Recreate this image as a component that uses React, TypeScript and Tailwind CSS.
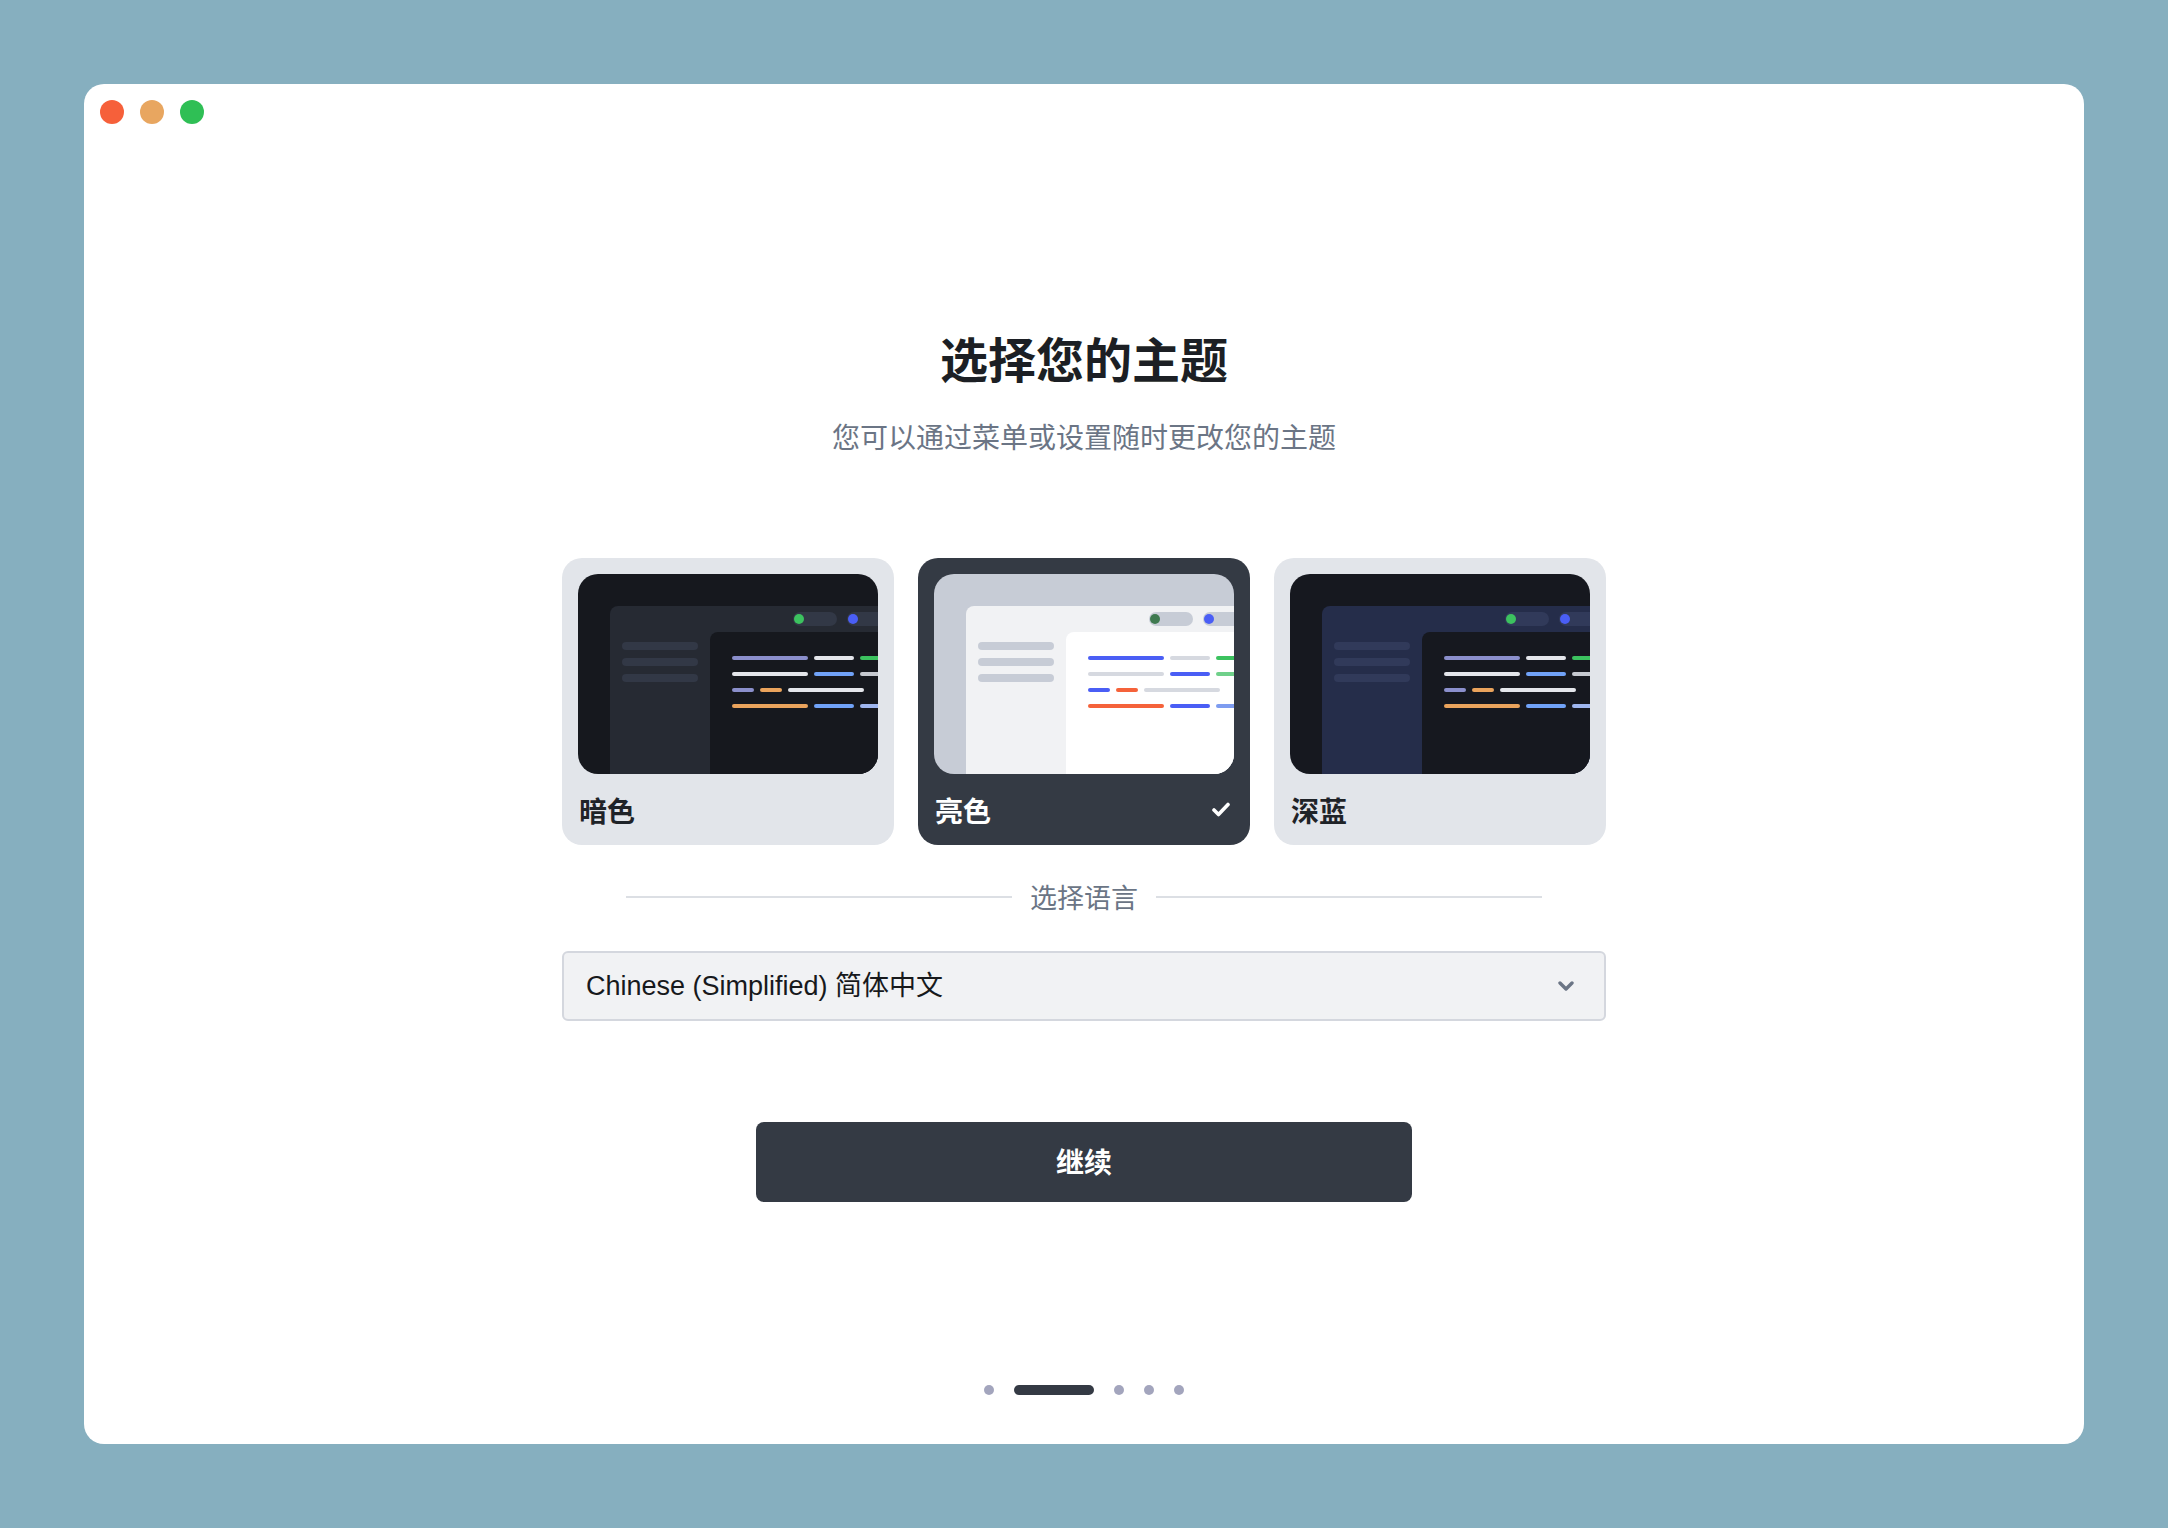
import { useState } from "react";

type Palette = {
  bg: string;
  inner: string;
  bar: string;
  pane: string;
  dotA: string;
  dotB: string;
  rows: string[][];
};

const cjk = { fontFamily: '"Noto Sans CJK SC", "Noto Sans", sans-serif' };
const latin = { fontFamily: '"Liberation Sans", "Noto Sans CJK SC", sans-serif' };

const darkRows = [
  ["#8b8fcc", "#e4e6eb", "#3cc25f"],
  ["#e4e6eb", "#70a2f8", "#c6c9d0"],
  ["#8b8fcc", "#eaa35c", "#e4e6eb"],
  ["#eaa35c", "#70a2f8", "#9fb6ef"],
];

const themes: { name: string; palette: Palette }[] = [
  {
    name: "暗色",
    palette: {
      bg: "bg-[#16181e]",
      inner: "bg-[#262a33]",
      bar: "bg-[#323846]",
      pane: "bg-[#16181e]",
      dotA: "#3cc25f",
      dotB: "#4a5ef5",
      rows: darkRows,
    },
  },
  {
    name: "亮色",
    palette: {
      bg: "bg-[#c7ccd6]",
      inner: "bg-[#f1f2f4]",
      bar: "bg-[#c7ccd6]",
      pane: "bg-white",
      dotA: "#3f7a50",
      dotB: "#4a5ef5",
      rows: [
        ["#4a5ef5", "#d6d9e0", "#3cc25f"],
        ["#d6d9e0", "#4a5ef5", "#6fd08a"],
        ["#4a5ef5", "#f5623a", "#d6d9e0"],
        ["#f5623a", "#4a5ef5", "#7e9cf0"],
      ],
    },
  },
  {
    name: "深蓝",
    palette: {
      bg: "bg-[#16181f]",
      inner: "bg-[#252d4a]",
      bar: "bg-[#313a5a]",
      pane: "bg-[#16181f]",
      dotA: "#3cc25f",
      dotB: "#4a5ef5",
      rows: darkRows,
    },
  },
];

const rowWidths = [
  [76, 40, 60],
  [76, 40, 60],
  [22, 22, 76],
  [76, 40, 60],
];

const Preview = ({ p }: { p: Palette }) => (
  <div className={`${p.bg} flex h-[200px] w-[300px] overflow-hidden rounded-[20px]`}>
    <div className={`${p.inner} ml-[32px] mt-[32px] flex h-[200px] w-[300px] shrink-0 flex-col rounded-tl-[8px]`}>
      <div className="flex h-[26px] shrink-0 items-center gap-[10px] pl-[183px]">
        {[p.dotA, p.dotB].map((c) => (
          <div key={c + "pill"} className={`${p.bar} flex h-[14px] w-[44px] shrink-0 items-center rounded-full pl-[1px]`}>
            <div className="h-[10px] w-[10px] rounded-full" style={{ backgroundColor: c }} />
          </div>
        ))}
      </div>
      <div className="flex flex-1">
        <div className="flex w-[100px] shrink-0 flex-col gap-2 px-[12px] pt-[10px]">
          <div className={`${p.bar} h-2 rounded-full`} />
          <div className={`${p.bar} h-2 rounded-full`} />
          <div className={`${p.bar} h-2 rounded-full`} />
        </div>
        <div className={`${p.pane} flex flex-1 flex-col gap-3 rounded-tl-[8px] pl-[22px] pt-6`}>
          {p.rows.map((row, i) => (
            <div key={i} className="flex gap-[6px]">
              {row.map((c, j) => (
                <div
                  key={j}
                  className="h-[4px] shrink-0 rounded-full"
                  style={{ backgroundColor: c, width: rowWidths[i][j] }}
                />
              ))}
            </div>
          ))}
        </div>
      </div>
    </div>
  </div>
);

export default function App() {
  const [active, setActive] = useState("亮色");
  return (
    <div className="flex h-[1528px] w-[2168px] items-center justify-center bg-[#86afbf]" style={cjk}>
      <div className="flex h-[1360px] w-[2000px] flex-col items-center rounded-[20px] bg-white">
        <div className="flex gap-4 self-start pl-4 pt-4">
          <div className="h-6 w-6 rounded-full bg-[#f6603a]" />
          <div className="h-6 w-6 rounded-full bg-[#e8a660]" />
          <div className="h-6 w-6 rounded-full bg-[#2fbf55]" />
        </div>

        <h1 className="mt-[205px] text-[48px] font-bold leading-[56px] text-[#1c1f24]">选择您的主题</h1>
        <p className="mt-[33px] text-[28px] leading-[36px] text-[#6b7585]">您可以通过菜单或设置随时更改您的主题</p>

        <div className="mt-[104px] flex w-[1044px] gap-[24px]">
          {themes.map((t) => {
            const on = active === t.name;
            return (
              <button
                key={t.name}
                onClick={() => setActive(t.name)}
                className={`${
                  on ? "bg-[#343a44] text-white" : "bg-[#e2e5ea] text-[#1f2328]"
                } flex h-[287px] w-[332px] flex-col rounded-[20px] p-4 pb-0 text-left`}
              >
                <Preview p={t.palette} />
                <div className="flex flex-1 items-center justify-between pl-[1px] pr-[4px]">
                  <span className="text-[28px] font-bold leading-none">{t.name}</span>
                  {on && (
                    <svg width="18" height="15" viewBox="0 0 18 15" fill="none">
                      <polyline
                        points="2,8 6.5,12.5 16,2.5"
                        stroke="white"
                        strokeWidth="3.6"
                        strokeLinecap="round"
                        strokeLinejoin="round"
                      />
                    </svg>
                  )}
                </div>
              </button>
            );
          })}
        </div>

        <div className="mt-[34px] flex w-[1044px] items-center gap-[18px] px-16">
          <div className="h-[2px] flex-1 bg-[#dcdfe4]" />
          <span className="text-[27px] leading-[36px] text-[#6b7585]">选择语言</span>
          <div className="h-[2px] flex-1 bg-[#dcdfe4]" />
        </div>

        <div className="mt-[36px] flex h-[70px] w-[1044px] items-center justify-between rounded-[6px] border-2 border-[#d4d7de] bg-[#f1f2f4] pl-[22px] pr-[30px]">
          <span className="text-[27px] text-[#17191c]" style={latin}>
            Chinese (Simplified) 简体中文
          </span>
          <svg width="16" height="10" viewBox="0 0 16 10" fill="none">
            <polyline
              points="2,2 8,8 14,2"
              stroke="#6b7585"
              strokeWidth="3.4"
              strokeLinecap="round"
              strokeLinejoin="round"
            />
          </svg>
        </div>

        <button className="mt-[101px] h-[80px] w-[656px] rounded-[8px] bg-[#343a44] pb-[2px] text-[28px] font-bold text-white">
          继续
        </button>

        <div className="mt-[183px] flex items-center gap-5">
          <div className="h-[10px] w-[10px] rounded-full bg-[#a3a5bd]" />
          <div className="h-[10px] w-[80px] rounded-full bg-[#343a44]" />
          <div className="h-[10px] w-[10px] rounded-full bg-[#a3a5bd]" />
          <div className="h-[10px] w-[10px] rounded-full bg-[#a3a5bd]" />
          <div className="h-[10px] w-[10px] rounded-full bg-[#a3a5bd]" />
        </div>
      </div>
    </div>
  );
}
